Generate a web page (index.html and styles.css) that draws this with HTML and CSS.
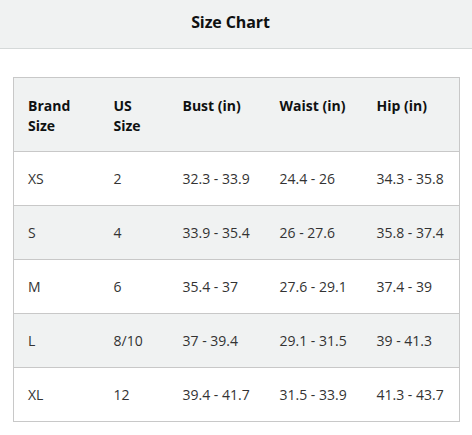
FILE: index.html
```html
<!DOCTYPE html>
<html>
<head>
<meta charset="utf-8">
<link rel="stylesheet" href="styles.css">
</head>
<body>
<header class="top">
  <h1 class="title">Size Chart</h1>
</header>
<main class="content">
  <table class="chart">
    <colgroup>
      <col class="c1"><col class="c2"><col class="c3"><col class="c4"><col class="c5">
    </colgroup>
    <thead>
      <tr><th>Brand<br>Size</th><th>US<br>Size</th><th>Bust (in)</th><th>Waist (in)</th><th>Hip (in)</th></tr>
    </thead>
    <tbody>
      <tr><td>XS</td><td>2</td><td>32.3 - 33.9</td><td>24.4 - 26</td><td>34.3 - 35.8</td></tr>
      <tr class="alt"><td>S</td><td>4</td><td>33.9 - 35.4</td><td>26 - 27.6</td><td>35.8 - 37.4</td></tr>
      <tr><td>M</td><td>6</td><td>35.4 - 37</td><td>27.6 - 29.1</td><td>37.4 - 39</td></tr>
      <tr class="alt"><td>L</td><td>8/10</td><td>37 - 39.4</td><td>29.1 - 31.5</td><td>39 - 41.3</td></tr>
      <tr><td>XL</td><td>12</td><td>39.4 - 41.7</td><td>31.5 - 33.9</td><td>41.3 - 43.7</td></tr>
    </tbody>
  </table>
</main>
</body>
</html>
```
FILE: styles.css
```css
* { box-sizing: border-box; }
html, body { margin: 0; padding: 0; background: #fff; }
body {
  font-family: "Open Sans", "Noto Sans", sans-serif;
  color: #0f1111;
  width: 472px;
}
.top {
  height: 49px;
  background: #f0f2f2;
  border-bottom: 1px solid #d5d9d9;
  display: flex;
  align-items: center;
  justify-content: center;
  padding-right: 11px;
  padding-bottom: 5px;
}
.title {
  margin: 0;
  font-size: 16px;
  font-weight: 700;
  line-height: 22px;
  letter-spacing: -0.1px;
}
.content {
  padding: 28px 13px 0 13px;
}
.chart {
  border-collapse: collapse;
  width: 446px;
  table-layout: fixed;
  border: 1px solid #c8c8c8;
  font-size: 14px;
  line-height: 20px;
}
.c1 { width: 86px; }
.c2 { width: 69px; }
.c3 { width: 97px; }
.c4 { width: 97px; }
.c5 { width: 97px; }
.chart th, .chart td {
  text-align: left;
  vertical-align: top;
  padding: 17px 0 16px 14px;
}
.chart th {
  font-weight: 700;
  background: #f0f2f2;
  padding-top: 18px;
  padding-bottom: 15px;
}
.chart td { color: #333; }
.chart tr { border-bottom: 1px solid #c8c8c8; }
.chart .alt td { background: #f0f2f2; }
```
